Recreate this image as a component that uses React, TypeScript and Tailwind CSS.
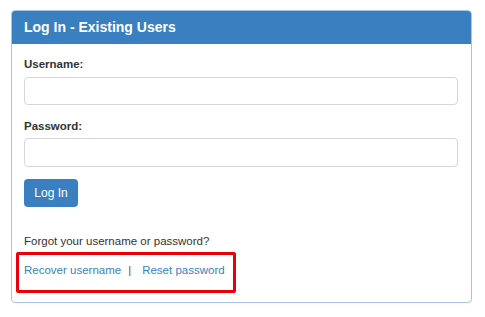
import React from "react";

export default function App() {
    return (
        <div className="w-[485px] h-[317px] bg-white pt-[10px] pl-[11px] font-['Liberation_Sans',Arial,sans-serif]">
            <div className="w-[461px] h-[293px] border border-[#a3c5e6] rounded-[4px] overflow-hidden">
                {/* Header */}
                <div className="h-[33px] bg-[#3a80c1] flex items-center px-3">
                    <h2 className="text-white text-[14px] font-bold">
                        Log In - Existing Users
                    </h2>
                </div>

                {/* Body */}
                <div className="px-3 pt-[11px]">
                    <label className="block text-[11.5px] leading-[18px] font-bold text-[#333]">
                        Username:
                    </label>
                    <input
                        type="text"
                        className="block mt-[4px] w-[434px] h-[28px] border border-[#d6d6d6] rounded-[4px] outline-none"
                    />

                    <label className="block mt-[12px] text-[11.5px] leading-[18px] font-bold text-[#333]">
                        Password:
                    </label>
                    <input
                        type="password"
                        className="block mt-[3px] w-[434px] h-[29px] border border-[#d6d6d6] rounded-[4px] outline-none"
                    />

                    <button className="block mt-[12px] h-[28px] w-[54px] bg-[#3a80c1] rounded-[4px] text-white text-[12px]">
                        Log In
                    </button>

                    <p className="mt-[25px] text-[11.5px] leading-[18px] text-[#333]">
                        Forgot your username or password?
                    </p>

                    {/* Highlighted links */}
                    <div className="-ml-[8px] mt-[2px] w-[220px] h-[41px] border-[3px] border-[#e8000b] rounded-[2px] pl-[5px] pt-[6px]">
                        <div className="flex items-center whitespace-nowrap text-[11.5px] leading-[18px]">
                            <a href="#" className="text-[#3c7fc0]">Recover username</a>
                            <span className="ml-[7px] text-[#6b4a55]">|</span>
                            <a href="#" className="ml-[11px] text-[#3c7fc0]">Reset password</a>
                        </div>
                    </div>
                </div>
            </div>
        </div>
    );
}
